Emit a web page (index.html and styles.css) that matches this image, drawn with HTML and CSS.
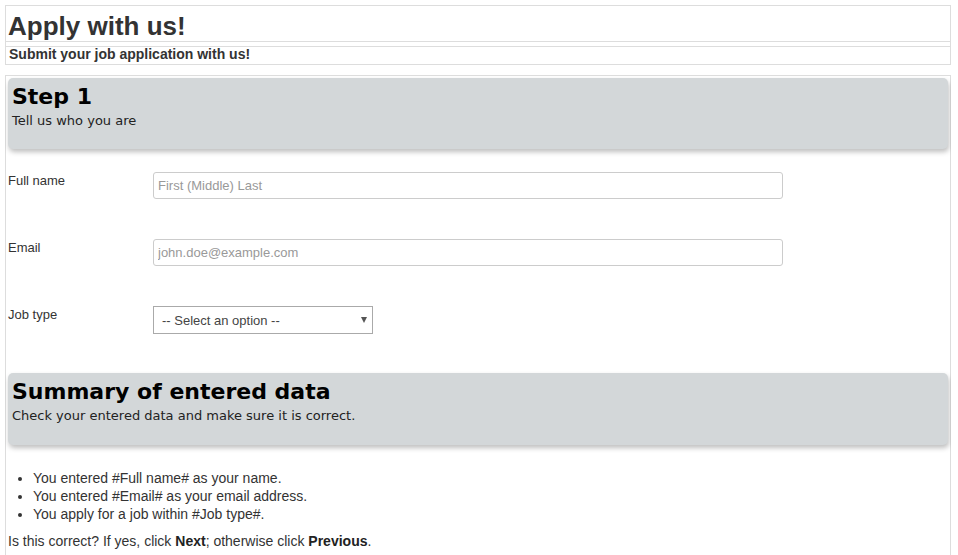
FILE: index.html
```html
<!DOCTYPE html>
<html lang="en">
<head>
<meta charset="utf-8">
<title>Apply with us!</title>
<link rel="stylesheet" href="styles.css">
</head>
<body>
<header class="page-header">
  <h1 class="page-title">Apply with us!</h1>
  <h2 class="page-subtitle">Submit your job application with us!</h2>
</header>

<main class="wizard">
  <section class="step-head">
    <h3 class="step-title">Step 1</h3>
    <p class="step-desc">Tell us who you are</p>
  </section>

  <form class="form">
    <div class="form-row">
      <label class="form-label" for="fullname">Full name</label>
      <input class="text-input" id="fullname" type="text" placeholder="First (Middle) Last">
    </div>
    <div class="form-row">
      <label class="form-label" for="email">Email</label>
      <input class="text-input" id="email" type="text" placeholder="john.doe@example.com">
    </div>
    <div class="form-row">
      <label class="form-label" for="jobtype">Job type</label>
      <span class="select-wrap">
        <select class="select-input" id="jobtype">
          <option>-- Select an option --</option>
        </select>
      </span>
    </div>
  </form>

  <section class="step-head summary-head">
    <h3 class="step-title">Summary of entered data</h3>
    <p class="step-desc">Check your entered data and make sure it is correct.</p>
  </section>

  <ul class="summary-list">
    <li>You entered #Full name# as your name.</li>
    <li>You entered #Email# as your email address.</li>
    <li>You apply for a job within #Job type#.</li>
  </ul>
  <p class="confirm">Is this correct? If yes, click <strong>Next</strong>; otherwise click <strong>Previous</strong>.</p>
</main>
</body>
</html>
```

FILE: styles.css
```css
html, body {
  background: #ffffff;
}

body {
  margin: 5px 7px 0 5px;
  font-family: "Liberation Sans", Arial, sans-serif;
  color: #333333;
}

.page-header {
  border: 1px solid #dddddd;
}

.page-title {
  margin: 0;
  padding: 5px 0 0 2px;
  font-size: 26px;
  line-height: 30px;
  font-weight: bold;
  color: #333333;
  border-bottom: 1px solid #dddddd;
}

.page-subtitle {
  margin: 4px 0 0 0;
  padding: 0 0 3px 3px;
  font-size: 14px;
  line-height: 14px;
  font-weight: bold;
  color: #333333;
  border-top: 1px solid #dddddd;
}

.wizard {
  margin-top: 10px;
  border: 1px solid #dddddd;
  border-bottom: none;
  padding: 2px 1px 2px 2px;
  min-height: 480px;
}

.step-head {
  background: #d3d7d9;
  border-radius: 5px;
  box-shadow: 1px 3px 5px rgba(0, 0, 0, 0.25);
  padding: 6px 4px 17px 4px;
  margin-right: 1px;
}

.step-title {
  margin: 0;
  font-family: "DejaVu Sans", Verdana, sans-serif;
  font-size: 22px;
  line-height: 26px;
  font-weight: bold;
  color: #000000;
}

.step-desc {
  margin: 0;
  font-family: "DejaVu Sans", Verdana, sans-serif;
  font-size: 13px;
  line-height: 22px;
  color: #222222;
}

.form {
  margin: 23px 0 0 0;
  display: flex;
  flex-direction: column;
  gap: 40px;
}

.form-row {
  display: flex;
  align-items: flex-start;
}

.form-label {
  width: 145px;
  flex: 0 0 145px;
  padding-top: 1px;
  font-size: 13px;
  line-height: 15px;
  color: #333333;
}

.text-input {
  box-sizing: border-box;
  width: 630px;
  height: 27px;
  margin: 0;
  padding: 0 4px;
  border: 1px solid #cccccc;
  border-radius: 3px;
  font-family: "Liberation Sans", Arial, sans-serif;
  font-size: 13px;
  color: #333333;
  background: #ffffff;
}

.text-input::placeholder {
  color: #999999;
  opacity: 1;
}

.select-wrap {
  position: relative;
  display: inline-block;
  width: 220px;
  height: 28px;
}

.select-wrap::after {
  content: "";
  position: absolute;
  right: 6px;
  top: 11px;
  border-left: 3px solid transparent;
  border-right: 3px solid transparent;
  border-top: 6px solid #555555;
  pointer-events: none;
}

.select-input {
  -webkit-appearance: none;
  appearance: none;
  box-sizing: border-box;
  width: 220px;
  height: 28px;
  margin: 0;
  padding: 0 20px 0 8px;
  border: 1px solid #aaaaaa;
  border-radius: 0;
  background: #ffffff;
  font-family: "Liberation Sans", Arial, sans-serif;
  font-size: 13px;
  color: #444444;
}

.summary-head {
  margin-top: 39px;
  padding-bottom: 18px;
}

.summary-list {
  margin: 24px 0 0 0;
  padding-left: 25px;
  font-size: 14px;
  line-height: 18px;
  color: #333333;
}

.confirm {
  margin: 9px 0 0 0;
  font-size: 14px;
  line-height: 18px;
  color: #333333;
}

.confirm strong {
  color: #222222;
}
```
